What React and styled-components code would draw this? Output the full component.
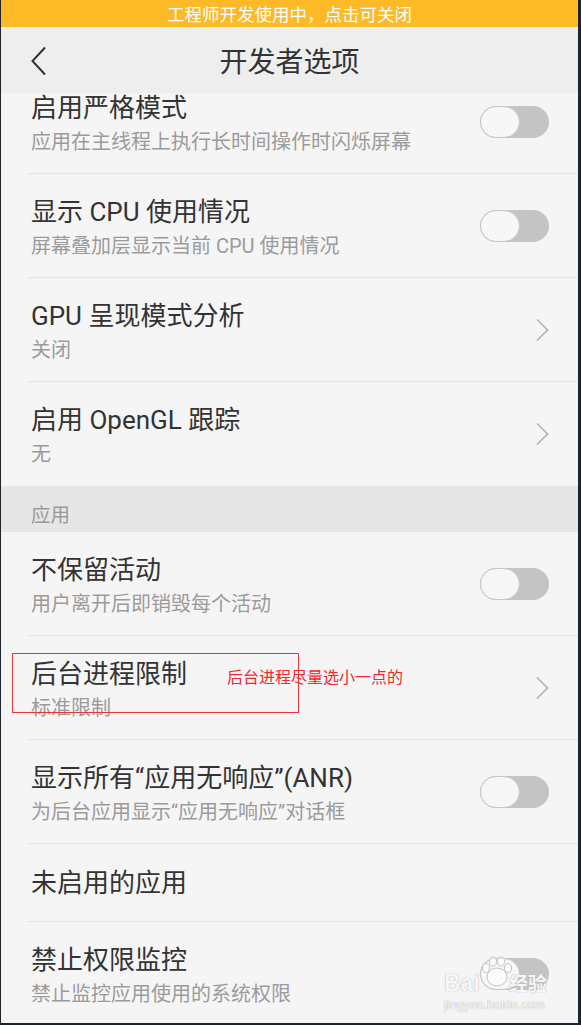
import styled, { createGlobalStyle } from "styled-components";

const GlobalStyle = createGlobalStyle`
  html, body {
    margin: 0;
    padding: 0;
    background: #1d242b;
  }
  * {
    box-sizing: border-box;
  }
`;

const Frame = styled.div`
  position: relative;
  width: 577px;
  height: 1023px;
  margin-left: 1px;
  overflow: hidden;
  display: flex;
  flex-direction: column;
  background: #f5f5f5;
  font-family: Roboto, "Noto Sans CJK SC", sans-serif;
`;

const Banner = styled.div`
  height: 27px;
  flex-shrink: 0;
  display: flex;
  align-items: center;
  justify-content: center;
  background: #fdb926;
  color: #ffffff;
  font-size: 17.5px;
`;

const Header = styled.div`
  position: relative;
  z-index: 1;
  height: 66px;
  flex-shrink: 0;
  display: flex;
  align-items: center;
  justify-content: center;
  background: #eeeeee;
`;

const BackButton = styled.div`
  position: absolute;
  left: 29px;
  top: 19px;
  width: 18px;
  height: 30px;
  display: flex;
`;

const Title = styled.div`
  font-size: 28px;
  color: #333333;
`;

const Content = styled.div`
  flex: 1;
  overflow: hidden;
`;

const List = styled.div`
  margin-top: -23px;
  display: flex;
  flex-direction: column;
`;

const Row = styled.div`
  height: ${(p) => (p.$single ? 78 : 104)}px;
  display: flex;
  align-items: center;
  padding-right: 29px;
  margin-left: ${(p) => (p.$last ? 0 : 27)}px;
  padding-left: ${(p) => (p.$last ? 30 : 3)}px;
  border-bottom: ${(p) => (p.$last ? "none" : "1px solid #e4e4e4")};
`;

const Texts = styled.div`
  flex: 1;
  align-self: ${(p) => (p.$single ? "center" : "flex-start")};
  padding-top: ${(p) => (p.$single ? 0 : 23)}px;
  display: flex;
  flex-direction: column;
`;

const ItemTitle = styled.div`
  font-size: 26px;
  line-height: 30px;
  color: #333333;
`;

const ItemSub = styled.div`
  margin-top: 6px;
  font-size: 20px;
  line-height: 26px;
  color: #9b9b9b;
  white-space: nowrap;
`;

const Side = styled.div`
  display: flex;
  align-items: center;
`;

const Track = styled.div`
  width: 69px;
  height: 32px;
  border-radius: 16px;
  background: #c4c4c4;
  display: flex;
`;

const Knob = styled.div`
  width: 40px;
  height: 32px;
  border-radius: 16px;
  background: #f7f7f7;
  border: 1.5px solid #c6c6c6;
`;

const SectionHeader = styled.div`
  height: 46px;
  padding: 17px 0 0 30px;
  background: #e6e6e6;
  color: #9a9a9a;
  font-size: 19.5px;
  line-height: 26px;
`;

const Annotation = styled.div`
  position: absolute;
  left: 11px;
  top: 653px;
  width: 287px;
  height: 60px;
  border: 1px solid #ec3434;
`;

const AnnotationText = styled.div`
  position: absolute;
  left: 226px;
  top: 665px;
  font-size: 16px;
  line-height: 22px;
  color: #ec2a2a;
  font-family: "Noto Sans CJK SC", sans-serif;
`;

const Watermark = styled.div`
  position: absolute;
  left: 443px;
  top: 952px;
  display: flex;
  flex-direction: column;
  align-items: flex-start;
  white-space: nowrap;
  color: rgba(255, 255, 255, 0.9);
  text-shadow: 0 0 1px #b8b8b8, 0 0 1px #b8b8b8;
  font-family: "Liberation Sans", sans-serif;
  pointer-events: none;
`;

const WatermarkMain = styled.div`
  position: relative;
  display: flex;
  align-items: flex-end;
  height: 44px;
  font-size: 23px;
  line-height: 26px;
  font-weight: 700;
`;

const Hidden = styled.span`
  opacity: 0;
`;

const WatermarkCjk = styled.span`
  font-family: "Noto Sans CJK SC", sans-serif;
  font-size: 19px;
  margin-left: 1px;
`;

const Paw = styled.svg`
  position: absolute;
  left: 36px;
  top: 4px;
`;

const WatermarkUrl = styled.div`
  font-size: 12.5px;
  margin-top: 2px;
`;

const Toggle = () => (
  <Track>
    <Knob />
  </Track>
);

const Chevron = () => (
  <svg width="14" height="24" viewBox="0 0 14 24">
    <path d="M2 1.5 L12.5 12 L2 22.5" fill="none" stroke="#b2b2b2" strokeWidth="1.6" />
  </svg>
);

const Item = ({ title, sub, action, last }) => (
  <Row $single={!sub} $last={last}>
    <Texts $single={!sub}>
      <ItemTitle>{title}</ItemTitle>
      {sub && <ItemSub>{sub}</ItemSub>}
    </Texts>
    {action && <Side>{action === "toggle" ? <Toggle /> : <Chevron />}</Side>}
  </Row>
);

const debugItems = [
  { title: "启用严格模式", sub: "应用在主线程上执行长时间操作时闪烁屏幕", action: "toggle" },
  { title: "显示 CPU 使用情况", sub: "屏幕叠加层显示当前 CPU 使用情况", action: "toggle" },
  { title: "GPU 呈现模式分析", sub: "关闭", action: "chevron" },
  { title: "启用 OpenGL 跟踪", sub: "无", action: "chevron", last: true },
];

const appItems = [
  { title: "不保留活动", sub: "用户离开后即销毁每个活动", action: "toggle" },
  { title: "后台进程限制", sub: "标准限制", action: "chevron" },
  { title: "显示所有“应用无响应”(ANR)", sub: "为后台应用显示“应用无响应”对话框", action: "toggle" },
  { title: "未启用的应用" },
  { title: "禁止权限监控", sub: "禁止监控应用使用的系统权限", action: "toggle", last: true },
];

export default function App() {
  return (
    <>
      <GlobalStyle />
      <Frame>
        <Banner>工程师开发使用中，点击可关闭</Banner>
        <Header>
          <BackButton>
            <svg width="18" height="30" viewBox="0 0 18 30">
              <path d="M15 1.5 L2.5 15 L15 28.5" fill="none" stroke="#333333" strokeWidth="2" />
            </svg>
          </BackButton>
          <Title>开发者选项</Title>
        </Header>
        <Content>
          <List>
            {debugItems.map((it) => (
              <Item key={it.title} {...it} />
            ))}
            <SectionHeader>应用</SectionHeader>
            {appItems.map((it) => (
              <Item key={it.title} {...it} />
            ))}
          </List>
        </Content>
        <Annotation />
        <AnnotationText>后台进程尽量选小一点的</AnnotationText>
        <Watermark>
          <WatermarkMain>
            <Paw width="34" height="32" viewBox="0 0 34 32">
              <g fill="rgba(255,255,255,0.55)" stroke="#c4c4c4" strokeWidth="1">
                <ellipse cx="17" cy="21" rx="10" ry="9" />
                <ellipse cx="6" cy="12" rx="3.5" ry="4.5" />
                <ellipse cx="13" cy="5.5" rx="3.5" ry="4.5" />
                <ellipse cx="21" cy="5.5" rx="3.5" ry="4.5" />
                <ellipse cx="28" cy="12" rx="3.5" ry="4.5" />
              </g>
            </Paw>
            Bai<Hidden>du</Hidden>
            <WatermarkCjk>经验</WatermarkCjk>
          </WatermarkMain>
          <WatermarkUrl>jingyan.baidu.com</WatermarkUrl>
        </Watermark>
      </Frame>
    </>
  );
}
